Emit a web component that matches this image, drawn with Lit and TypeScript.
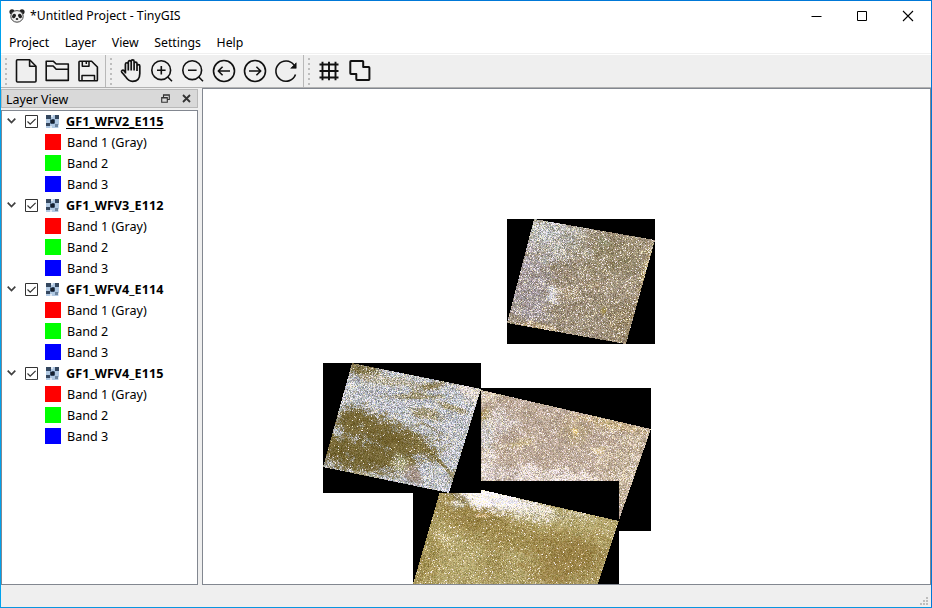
import { LitElement, html, css, svg } from "lit";
import { customElement, property } from "lit/decorators.js";

type RGB = [number, number, number];
/** Patch of ground cover: centre, radii, rotation, colour, opacity, grain, sparkle. */
type Patch = [number, number, number, number, number, RGB, number, number, number];
interface Scene {
  box: [number, number, number, number];
  shape: [number, number][];
  base: RGB;
  grain: number;
  spark: number;
  patches: Patch[];
}

const OLIVE: RGB = [117, 102, 52];
const SNOW: RGB = [234, 232, 246];
const HAZE: RGB = [186, 189, 196];
const GOLD: RGB = [182, 168, 112];
const SOIL: RGB = [152, 130, 70];

/* Scene coordinates are in map canvas pixels; later scenes lie on top. */
const scenes: Scene[] = [
  {
    box: [278, 299, 170, 143],
    shape: [[278, 301], [448, 340], [415, 434], [405, 442], [278, 442]],
    base: [187, 168, 152], grain: 26, spark: 0.11,
    patches: [
      [285, 302, 14, 10, 0, [212, 200, 176], 0.7, 36, 0.2],
      [281, 328, 6, 8, 0, [160, 136, 70], 0.8, 30, 0.1],
      [298, 335, 16, 14, 0, [204, 198, 198], 0.6, 38, 0.25],
      [282, 345, 8, 14, 0, [196, 196, 196], 0.7, 38, 0.2],
      [285, 380, 9, 12, 0, [230, 222, 222], 0.8, 36, 0.3],
      [315, 354, 12, 4, -0.2, [212, 196, 144], 0.6, 34, 0.3],
      [372, 342, 14, 12, 0, [178, 158, 116], 0.6, 22, 0.15],
      [372, 342, 3, 3, 0, [240, 208, 130], 0.9, 28, 0.4],
      [340, 386, 48, 8, 0.05, [220, 208, 204], 0.85, 36, 0.35],
      [416, 337, 34, 5, 0.22, [204, 180, 132], 0.8, 34, 0.25],
      [425, 380, 24, 40, 0.2, [200, 184, 160], 0.8, 34, 0.16],
      [300, 385, 18, 8, 0, [190, 176, 170], 0.6, 30, 0.15],
      [396, 361, 5, 3, 0, [220, 196, 140], 0.5, 30, 0.3],
    ],
  },
  {
    box: [210, 392, 206, 103],
    shape: [[240, 392], [416, 432], [395, 495], [210, 495]],
    base: GOLD, grain: 24, spark: 0.06,
    patches: [
      [272, 426, 44, 20, 0.3, SOIL, 0.85, 20, 0.05],
      [220, 470, 18, 40, 0.25, [162, 144, 82], 0.8, 23, 0.06],
      [320, 450, 45, 12, 0, [158, 137, 76], 0.8, 20, 0.05],
      [366, 470, 40, 24, -0.1, [152, 128, 68], 0.95, 17, 0.04],
      [290, 475, 14, 18, 0, [158, 139, 80], 0.6, 22, 0.06],
      [300, 412, 44, 10, 0.18, SNOW, 1, 34, 0.5],
      [340, 425, 38, 8, 0.1, [202, 194, 166], 0.8, 38, 0.25],
      [284, 403, 25, 8, 0.22, [248, 244, 252], 1, 20, 0.6],
      [255, 415, 8, 5, 0, [204, 202, 190], 0.7, 40, 0.25],
      [252, 406, 12, 3, 0.5, OLIVE, 0.7, 24, 0.05],
      [240, 448, 9, 5, 0.6, [200, 186, 136], 0.6, 30, 0.25],
      [278, 426, 7, 2, 0, [224, 194, 144], 0.8, 26, 0.4],
    ],
  },
  {
    box: [120, 274, 158, 130],
    shape: [[149, 274], [278, 300], [246, 404], [120, 378]],
    base: HAZE, grain: 42, spark: 0.19,
    patches: [
      [157, 280, 18, 7, 0.1, OLIVE, 0.85, 24, 0.08],
      [190, 292, 36, 5, 0.1, [176, 165, 136], 0.7, 38, 0.18],
      [228, 297, 16, 4, -0.2, [134, 119, 74], 0.8, 32, 0.08],
      [210, 307, 30, 3, 0, [140, 126, 82], 0.75, 32, 0.1],
      [247, 318, 16, 3, 0.3, [142, 126, 78], 0.7, 34, 0.08],
      [224, 325, 16, 5, 0.2, [146, 131, 88], 0.75, 32, 0.1],
      [268, 302, 18, 10, 0.3, [212, 200, 190], 0.7, 34, 0.35],
      [150, 330, 20, 13, -0.2, OLIVE, 1, 14, 0.02],
      [137, 362, 26, 18, 0.2, OLIVE, 1, 16, 0.03],
      [184, 350, 44, 18, 0.25, [117, 101, 50], 1, 14, 0.02],
      [172, 368, 34, 17, 0, OLIVE, 1, 15, 0.02],
      [222, 360, 16, 8, 0.8, [126, 110, 60], 0.8, 26, 0.05],
      [196, 374, 6, 9, -0.3, [176, 176, 142], 0.75, 38, 0.2],
      [158, 385, 17, 2.5, 0.1, [176, 170, 138], 0.6, 34, 0.15],
      [210, 387, 9, 8, 0, [158, 140, 127], 0.95, 24, 0.05],
      [240, 376, 18, 2, 0.8, [122, 108, 60], 0.8, 30, 0.06],
      [252, 388, 7, 7, 0, [144, 132, 90], 0.65, 36, 0.08],
      [230, 340, 18, 2, 0.5, [140, 126, 80], 0.5, 36, 0.1],
      [139, 347, 10, 0.4, 0.3, [204, 190, 148], 0.4, 28, 0.15],
      [210, 348, 26, 0.3, 0.2, [186, 174, 130], 0.3, 28, 0.12],
      [171, 322, 12, 1, -0.4, [224, 216, 190], 0.6, 28, 0.3],
    ],
  },
  {
    box: [304, 130, 148, 125],
    shape: [[331, 130], [452, 151], [423, 255], [304, 234]],
    base: [160, 146, 126], grain: 29, spark: 0.13,
    patches: [
      [345, 148, 40, 26, 0.2, [180, 180, 176], 0.85, 40, 0.22],
      [340, 142, 20, 8, 0.1, [194, 202, 208], 0.5, 42, 0.3],
      [325, 200, 24, 40, 0.2, [163, 154, 157], 0.9, 34, 0.14],
      [384, 164, 6, 5, 0, [196, 198, 196], 0.7, 36, 0.3],
      [349, 205, 6, 8, 0, [204, 208, 218], 0.75, 36, 0.35],
      [342, 171, 5, 4, 0, [196, 202, 204], 0.5, 36, 0.3],
      [366, 203, 12, 6, 0, [190, 170, 138], 0.45, 38, 0.25],
      [390, 195, 13, 5, 0, [180, 160, 128], 0.45, 38, 0.25],
      [410, 166, 34, 20, 0.1, [146, 134, 102], 0.7, 25, 0.1],
      [400, 152, 6, 5, 0, [138, 148, 112], 0.4, 22, 0.05],
      [330, 237, 22, 4, 0.17, [190, 164, 118], 0.6, 42, 0.25],
      [400, 222, 3, 4, 0, [170, 150, 76], 0.8, 14, 0.04],
      [425, 232, 20, 22, 0, [154, 136, 102], 0.7, 30, 0.13],
      [442, 183, 4, 24, 0.25, [184, 162, 110], 0.6, 38, 0.25],
    ],
  },
];

function hash(x: number, y: number, s: number): number {
  let h = Math.imul(x | 0, 374761393) ^ Math.imul(y | 0, 668265263) ^ Math.imul(s, 2246822519);
  h = Math.imul(h ^ (h >>> 13), 1274126177);
  h = Math.imul(h ^ (h >>> 15), 2246822519);
  return ((h ^ (h >>> 16)) >>> 0) / 4294967296;
}

function smooth(x: number, y: number, s: number): number {
  const xi = Math.floor(x), yi = Math.floor(y);
  let u = x - xi, v = y - yi;
  u = u * u * (3 - 2 * u);
  v = v * v * (3 - 2 * v);
  const a = hash(xi, yi, s), b = hash(xi + 1, yi, s);
  const c = hash(xi, yi + 1, s), d = hash(xi + 1, yi + 1, s);
  return a + (b - a) * u + (c - a) * v + (a - b - c + d) * u * v;
}

function inside(shape: [number, number][], x: number, y: number): boolean {
  let hit = false;
  for (let i = 0, j = shape.length - 1; i < shape.length; j = i++) {
    const [xi, yi] = shape[i], [xj, yj] = shape[j];
    if (yi > y !== yj > y && x < ((xj - xi) * (y - yi)) / (yj - yi) + xi) hit = !hit;
  }
  return hit;
}

function paintScene(ctx: CanvasRenderingContext2D, scene: Scene, seed: number) {
  const [bx, by, bw, bh] = scene.box;
  const img = ctx.createImageData(bw, bh);
  for (let j = 0; j < bh; j++) {
    for (let i = 0; i < bw; i++) {
      const x = bx + i, y = by + j, o = (j * bw + i) * 4;
      img.data[o + 3] = 255;
      if (!inside(scene.shape, x + 0.5, y + 0.5)) continue;
      const u = x + y * 0.35, v = y - x * 0.35;
      const wob = (smooth(u / 11, v / 7, seed) - 0.5) * 0.8 + (smooth(u / 4.3, v / 3.1, seed + 9) - 0.5) * 0.8;
      const dither = (hash(x, y, seed + 11) - 0.5) * 0.6;
      let [r, g, b] = scene.base;
      let grain = scene.grain, spark = scene.spark;
      for (const [cx, cy, rx, ry, rot, col, op, gr, sp] of scene.patches) {
        const dx = x - cx, dy = y - cy, c = Math.cos(rot), s = Math.sin(rot);
        const d = Math.hypot((dx * c + dy * s) / rx, (dy * c - dx * s) / ry);
        const m = Math.max(0, Math.min(1, (1.35 - d + wob * 0.8 + dither) * 1.3)) * op;
        if (m <= 0) continue;
        r += (col[0] - r) * m;
        g += (col[1] - g) * m;
        b += (col[2] - b) * m;
        grain += (gr - grain) * m;
        spark += (sp - spark) * m;
      }
      const n = (hash(x, y, seed + 1) + hash(x, y, seed + 2) - 1) * grain * 1.7 + wob * 16;
      const chroma = grain * 0.5;
      r += n + (hash(x, y, seed + 3) - 0.5) * chroma;
      g += n + (hash(x, y, seed + 4) - 0.5) * chroma * 0.6;
      b += n * 1.1 + (hash(x, y, seed + 5) - 0.5) * chroma * 1.6;
      if (hash(x, y, seed + 6) < spark * (1 + wob)) {
        const k = 0.45 + hash(x, y, seed + 7) * 0.55;
        r += (255 - r) * k;
        g += (246 - g) * k;
        b += ((hash(x, y, seed + 8) < 0.6 ? 255 : 205) - b) * k;
      }
      img.data[o] = r;
      img.data[o + 1] = g;
      img.data[o + 2] = b;
    }
  }
  ctx.putImageData(img, bx, by);
}

@customElement("map-canvas")
class MapCanvas extends LitElement {
  static styles = css`
    :host { display: block; box-sizing: border-box; border: 1px solid #828790; background: #fff; overflow: hidden; }
    .map { display: block; }
  `;
  firstUpdated() {
    const ctx = this.renderRoot.querySelector("canvas")!.getContext("2d")!;
    scenes.forEach((s, i) => paintScene(ctx, s, 20 + i * 31));
  }
  render() {
    return html`<canvas class="map" width="727" height="495"></canvas>`;
  }
}

const icons: Record<string, unknown> = {
  file: svg`<path d="M5.500 2.800H17.600L24 9.200V24a1 1 0 0 1-1 1H5.500a1 1 0 0 1-1-1V3.800a1 1 0 0 1 1-1z"/><path d="M17.600 2.800V9.200H24"/>`,
  folder: svg`<path d="M3.200 23.400V4.200H10.200L13.200 7H25.300V23.400z"/><path d="M3.200 9H10.200L13.200 12.200H25.300"/>`,
  save: svg`<path d="M5 5a.8.800 0 0 1 .8-.8H17.600L23.400 10V23a.8.800 0 0 1-.8.800H5.800A.8.800 0 0 1 5 23z"/><path d="M8.300 4.500V9.200H15V4.500M12.300 4.500V7M8 23.500V18.400H20.500V23.500" stroke-width="1.500"/>`,
  hand: svg`<path d="M8.400 16.500V7.200a1.450 1.450 0 0 1 2.900 0V5.100a1.450 1.450 0 0 1 2.900 0v-.7a1.450 1.450 0 0 1 2.900 0V6.500a1.450 1.450 0 0 1 2.900 0V9a1.400 1.400 0 0 1 2.800 0v7.500c0 5-2.800 7.900-7.200 7.900-4.200 0-5.700-2.400-7-4.700L4.800 15.200c-1-1.600 1-2.800 2.200-1.500l1.400 1.800M11.300 7v6.500M14.200 5v8.500M17.100 6.500v7M20 9v5" stroke-width="1.700"/>`,
  zoomIn: svg`<circle cx="13.200" cy="13.200" r="9.400"/><path d="M19.800 20L24 24.200M9 13.200H17.600M13.300 8.900V17.500"/>`,
  zoomOut: svg`<circle cx="13.200" cy="13.200" r="9.400"/><path d="M19.800 20L24 24.200M9 13.200H17.600"/>`,
  back: svg`<circle cx="14" cy="14" r="10.500"/><path d="M20 14H8.500M12.600 9.700L8.300 14L12.600 18.300"/>`,
  forward: svg`<circle cx="14" cy="14" r="10.500"/><path d="M8 14H19.500M15.400 9.700L19.700 14L15.400 18.300"/>`,
  refresh: svg`<path d="M23.500 17.500A10.100 10.100 0 1 1 22 8"/><path d="M24.200 5.800V11.300H18.700z" fill="#111" stroke-width=".6"/>`,
  grid: svg`<path d="M7.500 4.700V23.300M14 4.700V23.300M20.500 4.700V23.300M4.500 7.500H23.500M4.500 14H23.500M4.500 20.500H23.500" stroke-width="1.900"/>`,
  union: svg`<path d="M5 4H16.500a.7.700 0 0 1 .7.700V10H22.700a.7.700 0 0 1 .7.700V22.300a.7.700 0 0 1-.7.700H11a.7.700 0 0 1-.7-.7V17H5a.7.700 0 0 1-.7-.7V4.700A.7.700 0 0 1 5 4z" stroke-width="2"/>`,
};

@customElement("tool-group")
class ToolGroup extends LitElement {
  @property({ attribute: false }) names: string[] = [];
  static styles = css`
    :host { display: flex; align-items: center; height: 32px; }
    .grip { width: 2px; height: 27px; margin-left: 4px; margin-right: 3px;
      background: repeating-linear-gradient(#bdbdbd 0 2px, transparent 2px 5px); }
    .tool { width: 31px; height: 28px; display: grid; place-items: center; }
    svg { width: 28px; height: 28px; fill: none; stroke: #111; stroke-width: 1.600; stroke-linejoin: round; }
  `;
  render() {
    return html`<span class="grip"></span>${this.names.map(
      (n) => html`<span class="tool"><svg viewBox="0 0 28 28">${icons[n]}</svg></span>`,
    )}`;
  }
}

@customElement("layer-tree")
class LayerTree extends LitElement {
  static styles = css`
    :host { display: block; box-sizing: border-box; border: 1px solid #828790; background: #fff; }
    .row { display: flex; align-items: center; height: 21px; }
    .chev { width: 9px; height: 6px; margin: -2px 9px 0 5px; }
    .check { width: 13px; height: 13px; margin-right: 8px; }
    .raster { width: 13px; height: 13px; margin-right: 7px; }
    .name { font-weight: 700; letter-spacing: .06px; line-height: 16px; }
    .active { text-decoration: underline; text-underline-offset: 2px; text-decoration-skip-ink: none; }
    .swatch { width: 16px; height: 16px; margin: -1px 6px 0 43px; }
    .r { background: #f00; } .g { background: #0f0; } .b { background: #00f; }
  `;
  render() {
    const names = ["GF1_WFV2_E115", "GF1_WFV3_E112", "GF1_WFV4_E114", "GF1_WFV4_E115"];
    const bands = [["r", "Band 1 (Gray)"], ["g", "Band 2"], ["b", "Band 3"]];
    return names.map(
      (name, i) => html`
        <div class="row">
          <svg class="chev" viewBox="0 0 9 6"><path d="M.7.7L4.500 4.500L8.300.7" fill="none" stroke="#404040" stroke-width="1.700"/></svg>
          <svg class="check" viewBox="0 0 13 13"><path d="M.5.500H12.500V12.500H.5z" fill="#fff" stroke="#333"/><path d="M2.500 6.500L5.200 9.200L10.600 3.800" fill="none" stroke="#333" stroke-width="1.200"/></svg>
          <svg class="raster" viewBox="0 0 13 13" shape-rendering="crispEdges">
            <path fill="#b0c8e2" d="M0 0H13V13H0z"/>
            <path fill="#34475f" d="M0 0H5V4H0zM9 0H13V4H9zM4 4H9V9H4zM0 8H4V11H0z"/>
            <path fill="#6e859f" d="M4 4H6V5H4zM8 4H9V5H8zM4 8H5V9H4zM8 8H9V9H8zM9 9H12V12H9z"/>
            <path fill="#dfe8f2" d="M5 0H7V2H5zM4 11H6V13H4zM12 10H13V13H12z"/>
            <path fill="#16202e" d="M5 5H8V8H5z"/>
          </svg>
          <span class="name ${i === 0 ? "active" : ""}">${name}</span>
        </div>
        ${bands.map(([c, t]) => html`<div class="row"><span class="swatch ${c}"></span><span>${t}</span></div>`)}
      `,
    );
  }
}

@customElement("app-root")
class AppRoot extends LitElement {
  static styles = css`
    :host { display: flex; flex-direction: column; box-sizing: border-box; width: 932px; height: 608px;
      border: 1px solid #0078d7; border-left-color: #00a2ed; border-bottom-color: #0a96e0; background: #efefef;
      font: 12.600px "Noto Sans", "Liberation Sans", sans-serif; color: #000; white-space: nowrap; }
    .title { display: flex; align-items: center; height: 29px; background: #fff; padding-left: 8px; font-size: 12.300px; }
    .panda { width: 16px; height: 16px; margin-right: 5px; }
    .caption { flex: 1; }
    .win { width: 46px; display: grid; place-items: center; }
    .win svg { width: 12px; height: 12px; fill: none; stroke: #000; }
    .menu { display: flex; align-items: center; gap: 15.500px; height: 24px; padding: 1px 0 0 8px; background: #fff;
      border-bottom: 1px solid #f0f0f0; box-sizing: border-box; font-size: 12.300px; }
    .tools { display: flex; height: 34px; box-sizing: border-box; border-top: 1px solid #fff; border-bottom: 1px solid #b2b2b2; }
    .sep { width: 1px; background: #b8b8b8; }
    .g1 { width: 104px; } .g2 { width: 197px; }
    .body { display: flex; gap: 4px; height: 497px; }
    .dock { display: flex; flex-direction: column; width: 197px; padding-top: 1px; box-sizing: border-box; }
    .head { display: flex; align-items: center; height: 19px; box-sizing: border-box; padding: 1px 6px 0 4px;
      border: 1px solid #b9b9b9; background: #d9d9d9; margin-bottom: 2px; font-size: 12.400px; }
    .head span { flex: 1; }
    .head svg { width: 9px; height: 9px; margin-top: -1px; fill: none; stroke: #333; }
    .head .x { margin-left: 12px; }
    layer-tree { flex: 1; }
    map-canvas { flex: 1; }
    .status { flex: 1; display: flex; justify-content: flex-end; align-items: flex-end; }
    .size { width: 8px; height: 8px; margin: 0 3px 2px 0; fill: #bdbdbd; }
  `;
  render() {
    return html`
      <div class="title">
        <svg class="panda" viewBox="0 0 16 16">
          <circle cx="3" cy="3.800" r="2.600" fill="#222"/><circle cx="13" cy="3.800" r="2.600" fill="#222"/>
          <ellipse cx="8" cy="8.400" rx="6.200" ry="5.800" fill="#f0f0f0" stroke="#444" stroke-width="1"/>
          <ellipse cx="5" cy="8" rx="1.800" ry="2.300" fill="#222" transform="rotate(35 5 8)"/>
          <ellipse cx="11" cy="8" rx="1.800" ry="2.300" fill="#222" transform="rotate(-35 11 8)"/>
          <ellipse cx="8" cy="11" rx="1.300" ry=".9" fill="#222"/>
        </svg>
        <span class="caption">*Untitled Project - TinyGIS</span>
        <span class="win"><svg viewBox="0 0 12 12"><path d="M1.500 6.500H11.500"/></svg></span>
        <span class="win"><svg viewBox="0 0 12 12"><path d="M1.500 1.500H10.500V10.500H1.500z"/></svg></span>
        <span class="win"><svg viewBox="0 0 12 12"><path d="M1 1L11 11M11 1L1 11" stroke-width="1.100"/></svg></span>
      </div>
      <div class="menu"><span>Project</span><span>Layer</span><span>View</span><span>Settings</span><span>Help</span></div>
      <div class="tools">
        <tool-group class="g1" .names=${["file", "folder", "save"]}></tool-group><span class="sep"></span>
        <tool-group class="g2" .names=${["hand", "zoomIn", "zoomOut", "back", "forward", "refresh"]}></tool-group><span class="sep"></span>
        <tool-group .names=${["grid", "union"]}></tool-group>
      </div>
      <div class="body">
        <div class="dock">
          <div class="head">
            <span>Layer View</span>
            <svg viewBox="0 0 9 9"><path d="M2.500 3V.8H8.300V5.500H6.500M.7 3.500H6.300V8.300H.7zM.7 4H6.300M2.500 1.200H8.300" stroke-width="1.100"/></svg>
            <svg class="x" viewBox="0 0 9 9"><path d="M1 1L8 8M8 1L1 8" stroke-width="1.800"/></svg>
          </div>
          <layer-tree></layer-tree>
        </div>
        <map-canvas></map-canvas>
      </div>
      <div class="status">
        <svg class="size" viewBox="0 0 8 8"><path d="M6 0h2v2H6zM3 3h2v2H3zM6 3h2v2H6zM0 6h2v2H0zM3 6h2v2H3zM6 6h2v2H6z"/></svg>
      </div>
    `;
  }
}
